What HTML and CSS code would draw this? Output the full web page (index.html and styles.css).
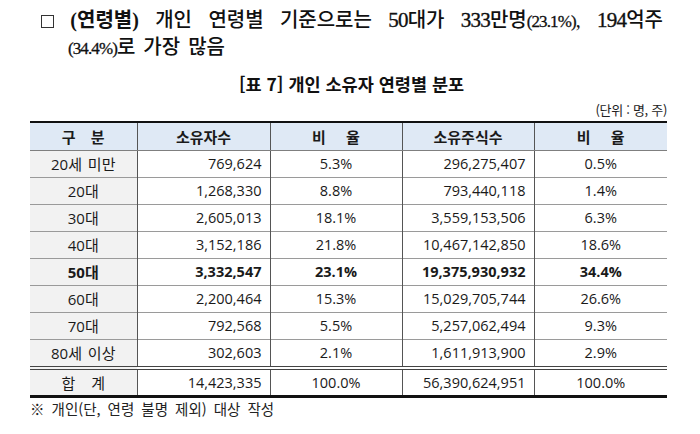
FILE: index.html
```html
<!DOCTYPE html>
<html lang="ko">
<head>
<meta charset="utf-8">
<link rel="stylesheet" href="styles.css">
</head>
<body>
<div class="page">
  <div class="lead">
    <div class="line1">
      <span class="box"></span>
      <span class="b">(연령별)</span>
      <span>개인</span>
      <span>연령별</span>
      <span>기준으로는</span>
      <span><span class="num">50</span>대가</span>
      <span><span class="num">333</span>만명<span class="small">(23.1%)</span>,</span>
      <span><span class="num">194</span>억주</span>
    </div>
    <div class="line2"><span class="small">(34.4%)</span>로 가장 많음</div>
  </div>
  <div class="title">[표 7] 개인 소유자 연령별 분포</div>
  <div class="unit">(단위 : 명, 주)</div>
  <table class="dist">
    <colgroup>
      <col class="c1"><col class="c2"><col class="c3"><col class="c4"><col class="c5">
    </colgroup>
    <thead>
      <tr>
        <th><span class="ws1">구 분</span></th>
        <th>소유자수</th>
        <th><span class="ws2">비 율</span></th>
        <th>소유주식수</th>
        <th><span class="ws2">비 율</span></th>
      </tr>
    </thead>
    <tbody>
      <tr><td class="lab">20세 미만</td><td class="r">769,624</td><td class="c">5.3%</td><td class="r">296,275,407</td><td class="c">0.5%</td></tr>
      <tr><td class="lab">20대</td><td class="r">1,268,330</td><td class="c">8.8%</td><td class="r">793,440,118</td><td class="c">1.4%</td></tr>
      <tr><td class="lab">30대</td><td class="r">2,605,013</td><td class="c">18.1%</td><td class="r">3,559,153,506</td><td class="c">6.3%</td></tr>
      <tr><td class="lab">40대</td><td class="r">3,152,186</td><td class="c">21.8%</td><td class="r">10,467,142,850</td><td class="c">18.6%</td></tr>
      <tr class="hl"><td class="lab">50대</td><td class="r">3,332,547</td><td class="c">23.1%</td><td class="r">19,375,930,932</td><td class="c">34.4%</td></tr>
      <tr><td class="lab">60대</td><td class="r">2,200,464</td><td class="c">15.3%</td><td class="r">15,029,705,744</td><td class="c">26.6%</td></tr>
      <tr><td class="lab">70대</td><td class="r">792,568</td><td class="c">5.5%</td><td class="r">5,257,062,494</td><td class="c">9.3%</td></tr>
      <tr><td class="lab">80세 이상</td><td class="r">302,603</td><td class="c">2.1%</td><td class="r">1,611,913,900</td><td class="c">2.9%</td></tr>
      <tr class="total"><td class="lab"><span class="ws3">합 계</span></td><td class="r">14,423,335</td><td class="c">100.0%</td><td class="r">56,390,624,951</td><td class="c">100.0%</td></tr>
    </tbody>
  </table>
  <div class="note">※ 개인(단, 연령 불명 제외) 대상 작성</div>
</div>
</body>
</html>
```

FILE: styles.css
```css
html, body {
  margin: 0;
  padding: 0;
  background: #ffffff;
}

.page {
  width: 637px;
  padding: 7px 33px 0 30px;
  color: #111;
  font-family: "Open Sans", "Noto Sans CJK KR", sans-serif;
}

.lead {
  font-family: "Liberation Serif", "Noto Sans CJK KR", serif;
  font-size: 20px;
  font-weight: 500;
  line-height: 27px;
  color: #111;
  padding: 0 4px 0 11px;
}

.line1 {
  display: flex;
  justify-content: space-between;
  align-items: center;
  height: 27px;
}

.line2 {
  padding-left: 27px;
  height: 27px;
  word-spacing: 3px;
}

.box {
  display: inline-block;
  width: 11px;
  height: 11px;
  border: 1px solid #333;
  margin-top: 1px;
}

.b {
  font-weight: 700;
}

.num {
  font-family: "Liberation Serif", serif;
  font-weight: 400;
  font-size: 21px;
  letter-spacing: -0.8px;
  -webkit-text-stroke: 0.35px #111;
}

.small {
  font-family: "Liberation Serif", serif;
  font-weight: 400;
  font-size: 17px;
  letter-spacing: -0.9px;
  -webkit-text-stroke: 0.3px #111;
}

.title {
  margin-top: 11px;
  text-align: center;
  font-family: "Noto Sans CJK KR", sans-serif;
  font-weight: 700;
  font-size: 17.5px;
  line-height: 24px;
  padding-left: 6px;
}

.unit {
  margin-top: 5px;
  text-align: right;
  font-family: "Noto Sans CJK KR", sans-serif;
  font-size: 13px;
  line-height: 17px;
  letter-spacing: -0.3px;
  color: #222;
}

.dist {
  margin-top: 3px;
  width: 637px;
  border-collapse: collapse;
  table-layout: fixed;
  font-size: 14.5px;
  color: #1a1a1a;
  border-top: 2px solid #111;
  border-bottom: 3px solid #111;
}

.c1 { width: 107px; }
.c2 { width: 133px; }
.c3 { width: 132px; }
.c4 { width: 132px; }
.c5 { width: 133px; }

.dist th {
  background: #dfe9f5;
  font-family: "Noto Sans CJK KR", sans-serif;
  font-weight: 700;
  font-size: 15px;
  height: 27px;
  padding: 0;
  border-bottom: 1px solid #7f7f7f;
  border-left: 1px solid #555;
}

.ws1 { word-spacing: 11px; }
.ws2 { word-spacing: 16px; }
.ws3 { word-spacing: 12px; }

.dist td {
  height: 26px;
  padding: 0;
  border-top: 1px solid #9a9a9a;
  border-left: 1px solid #555;
  line-height: 20px;
}

.dist th:first-child,
.dist td:first-child {
  border-left: none;
}

.dist tbody tr:first-child td {
  border-top: 1px solid #7f7f7f;
}

.dist td.lab {
  background: #f2f2f2;
  text-align: center;
  font-size: 15px;
  word-spacing: 2px;
}

.dist td.r {
  text-align: right;
  padding-right: 8px;
}

.dist td.c {
  text-align: center;
}

.dist tr.hl td {
  font-weight: 700;
}

.dist tr.total td {
  height: 25px;
  border-top: 4px double #444;
}

.note {
  margin-top: 1px;
  font-family: "Noto Sans CJK KR", sans-serif;
  font-size: 14.5px;
  line-height: 20px;
  word-spacing: 3px;
  color: #222;
}
```
